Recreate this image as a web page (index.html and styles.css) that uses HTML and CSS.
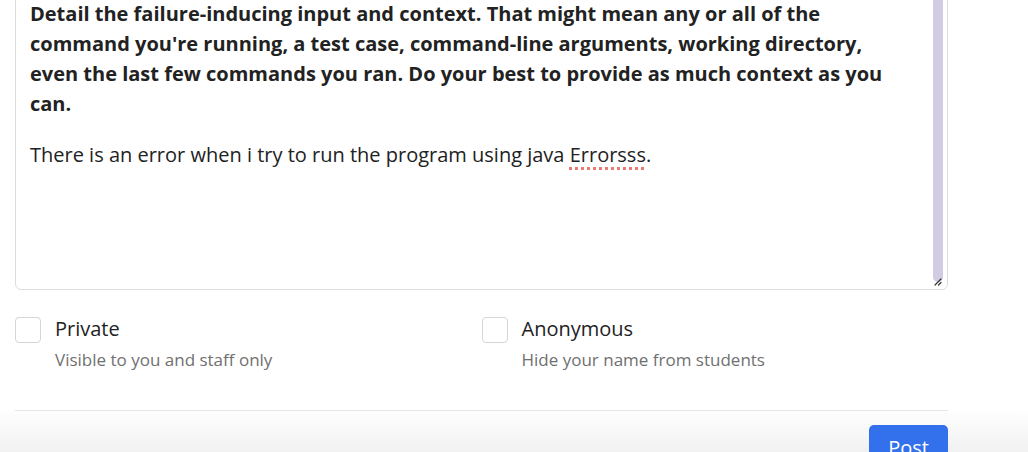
FILE: index.html
```html
<!DOCTYPE html>
<html>
<head>
<meta charset="utf-8">
<link rel="stylesheet" href="styles.css">
</head>
<body>
<div class="page">
  <div class="editor">
    <div class="content">
      <p class="prompt">Detail the failure-inducing input and context. That might mean any or all of the command you're running, a test case, command-line arguments, working directory, even the last few commands you ran. Do your best to provide as much context as you can.</p>
      <p class="body">There is an error when i try to run the program using java <span class="spell">Errorsss</span>.</p>
    </div>
    <div class="scrollbar"></div>
    <svg class="grip" width="10" height="10" viewBox="0 0 10 10"><path d="M9 3 L3 9 M9 6.5 L6.5 9" stroke="#333" stroke-width="1.2" stroke-linecap="round"/></svg>
  </div>
  <div class="options">
    <label class="option">
      <span class="box"></span>
      <span class="text">
        <span class="title">Private</span>
        <span class="desc">Visible to you and staff only</span>
      </span>
    </label>
    <label class="option">
      <span class="box"></span>
      <span class="text">
        <span class="title">Anonymous</span>
        <span class="desc">Hide your name from students</span>
      </span>
    </label>
  </div>
  <div class="divider"></div>
</div>
<div class="footer">
  <div class="footer-inner">
    <button class="post">Post</button>
  </div>
</div>
</body>
</html>
```
FILE: styles.css
```css
* { box-sizing: border-box; }
html, body { margin: 0; padding: 0; background: #fff; overflow: hidden; }
body {
  font-family: "Open Sans", "Liberation Sans", sans-serif;
  color: #222;
  width: 1028px;
  height: 452px;
  position: relative;
}
.page {
  width: 933px;
  margin-left: 15px;
  margin-top: -40px;
}
.editor {
  position: relative;
  height: 330px;
  border: 1px solid #dcdcdc;
  border-radius: 6px;
  padding: 38px 40px 0 14px;
}
.content p { margin: 0; }
.prompt {
  font-weight: 700;
  font-size: 20px;
  line-height: 30px;
  color: #222;
}
.body {
  margin-top: 21px !important;
  font-size: 20px;
  line-height: 30px;
  color: #222;
}
.spell {
  text-decoration: underline dotted #ec7a72;
  text-decoration-thickness: 3px;
  text-underline-offset: 5px;
}
.scrollbar {
  position: absolute;
  right: 4px;
  top: 0;
  width: 10px;
  height: 321px;
  background: #d2cbe4;
  border-radius: 0 0 5px 5px;
}
.grip {
  position: absolute;
  right: 5px;
  bottom: 3px;
}
.options {
  display: grid;
  grid-template-columns: 1fr 1fr;
  padding-top: 27px;
}
.option {
  display: flex;
  gap: 14px;
  align-items: flex-start;
}
.box {
  width: 26px;
  height: 26px;
  border: 1px solid #d6d6d6;
  border-radius: 4px;
  flex: none;
}
.text { display: flex; flex-direction: column; }
.title {
  font-size: 20px;
  line-height: 26px;
  margin-top: -1px;
  color: #222;
}
.desc {
  font-size: 17px;
  line-height: 20px;
  margin-top: 8px;
  color: #707070;
}
.divider {
  margin-top: 40px;
  height: 1px;
  background: #e6e6e6;
}
.footer {
  position: absolute;
  left: 0;
  right: 0;
  top: 411px;
  height: 41px;
  background: linear-gradient(to bottom, #fefefe, #f1f1f1);
}
.footer-inner {
  width: 933px;
  margin-left: 15px;
  display: flex;
  justify-content: flex-end;
  padding-top: 14px;
}
.post {
  background: #3370eb;
  color: #fff;
  border: none;
  border-radius: 5px;
  font-family: "Open Sans", "Liberation Sans", sans-serif;
  font-size: 20px;
  width: 79px;
  height: 40px;
  padding: 3px 0 0;
  line-height: 40px;
}
```
